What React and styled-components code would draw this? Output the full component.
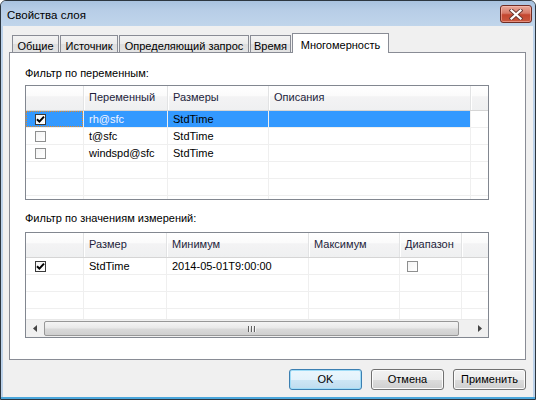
import React from 'react';
import styled, { createGlobalStyle, css } from 'styled-components';

const Global = createGlobalStyle`
  html, body { margin: 0; padding: 0; background: #fff; }
  body { font-family: "Liberation Sans", Arial, sans-serif; font-size: 11px; color: #000; }
  * { box-sizing: border-box; }
`;

const Window = styled.div`
  width: 536px;
  height: 400px;
  display: flex;
  flex-direction: column;
  border: 1px solid #2c3640;
  border-radius: 6px 6px 0 0;
  overflow: hidden;
  background: #bcd2ea;
  box-shadow: inset 0 -2px 0 #4aa6db;
`;

const TitleBar = styled.div`
  height: 25px;
  flex: none;
  display: flex;
  align-items: flex-start;
  justify-content: space-between;
  padding: 0 3px 0 6px;
  background: linear-gradient(180deg, #a8c2df 0%, #b8cee7 40%, #c0d5eb 100%);
`;

const Title = styled.div`
  font-size: 11.5px;
  line-height: 14px;
  padding-top: 7px;
  color: #000;
`;

const CloseBtn = styled.div`
  width: 32px;
  height: 18px;
  margin-top: 4px;
  border: 1px solid #6e2c24;
  border-radius: 3px;
  background: linear-gradient(180deg, #e9a99a 0%, #d77a68 45%, #c4462f 55%, #c9583f 100%);
  box-shadow: inset 0 0 0 1px rgba(255, 200, 190, 0.5);
  display: flex;
  align-items: center;
  justify-content: center;
`;

const Client = styled.div`
  flex: 1;
  margin: 0 2px 2px 2px;
  background: #f0f0f0;
  display: flex;
  flex-direction: column;
  padding: 7px 7px 0 6px;
`;

const TabStrip = styled.div`
  display: flex;
  align-items: flex-end;
  height: 20px;
  margin-bottom: -1px;
  padding-left: 3px;
  position: relative;
  z-index: 1;
`;

const Tab = styled.div`
  width: ${(p) => p.$w}px;
  border: 1px solid #898c95;
  border-bottom: none;
  text-align: center;
  white-space: nowrap;
  ${(p) =>
    p.$active
      ? css`
          height: 20px;
          background: #fff;
          line-height: 14px;
          padding-top: 4px;
          margin-left: 0;
        `
      : css`
          height: 17px;
          margin-bottom: 1px;
          margin-right: 1px;
          background: linear-gradient(180deg, #f3f3f3 0%, #ebebeb 50%, #dedede 51%, #e4e4e4 100%);
          line-height: 14px;
          padding-top: 3px;
        `}
`;

const Panel = styled.div`
  height: 308px;
  border: 1px solid #898c95;
  background: #fff;
  padding: 13px 0 0 15px;
  display: flex;
  flex-direction: column;
`;

const Label = styled.div`
  height: 14px;
  line-height: 14px;
  margin-top: ${(p) => p.$mt || 0}px;
  margin-bottom: ${(p) => p.$mb}px;
`;

const Grid = styled.div`
  width: 464px;
  height: ${(p) => p.$h}px;
  border: 1px solid #828790;
  background: #fff;
  display: flex;
  flex-direction: column;
  overflow: hidden;
`;

const HeaderRow = styled.div`
  display: grid;
  grid-template-columns: ${(p) => p.$cols};
  height: 25px;
  flex: none;
  background: linear-gradient(180deg, #ffffff 0%, #fbfbfb 40%, #f3f3f4 45%, #eff0f1 100%);
  border-bottom: 1px solid #d5d5d5;
`;

const HeaderCell = styled.div`
  padding-left: 5px;
  line-height: 23px;
  white-space: nowrap;
  overflow: hidden;
  color: #1e1e3c;
  border-left: ${(p) => (p.$first ? 'none' : '1px solid #e2e3e4')};
  box-shadow: ${(p) => (p.$first ? 'none' : 'inset 1px 0 0 #fff')};
`;

const Rows = styled.div`
  flex: 1;
  overflow: hidden;
`;

const Row = styled.div`
  display: grid;
  grid-template-columns: ${(p) => p.$cols};
  height: 17px;
  border-bottom: 1px solid #efefef;
`;

const Cell = styled.div`
  padding-left: ${(p) => p.$pl ?? 5}px;
  line-height: 16px;
  white-space: nowrap;
  overflow: hidden;
  display: flex;
  align-items: center;
  border-left: ${(p) => (p.$first ? 'none' : '1px solid #efefef')};
  background: ${(p) => (p.$sel ? '#3399ff' : 'transparent')};
  color: ${(p) => (p.$light ? '#f4f4ff' : '#000')};
  ${(p) =>
    p.$focus &&
    css`
      outline: 1px dotted #e08a2a;
      outline-offset: -1px;
    `}
`;

const Box = styled.div`
  width: 11px;
  height: 11px;
  border: 1px solid ${(p) => (p.$checked ? '#3a3a3a' : '#8e8f8f')};
  background: linear-gradient(135deg, #f4f4f4 0%, #ffffff 100%);
  display: flex;
  align-items: center;
  justify-content: center;
`;

const Scrollbar = styled.div`
  height: 18px;
  flex: none;
  display: flex;
  align-items: stretch;
  background: #f0f0f0;
  border-top: 1px solid #e8e8e8;
`;

const ArrowBtn = styled.div`
  width: ${(p) => p.$w}px;
  display: flex;
  align-items: center;
  justify-content: center;
`;

const Thumb = styled.div`
  width: ${(p) => p.$w}px;
  margin: 1px 0;
  border: 1px solid #979797;
  border-radius: 2px;
  background: linear-gradient(180deg, #f4f4f4 0%, #e9e9e9 45%, #d9d9d9 55%, #cfcfcf 100%);
  display: flex;
  align-items: center;
  justify-content: center;
  gap: 1px;
`;

const GripLine = styled.div`
  width: 1px;
  height: 6px;
  background: #606060;
  box-shadow: 1px 0 0 #f5f5f5;
  margin-right: 1px;
`;

const Track = styled.div`
  flex: 1;
`;

const ButtonRow = styled.div`
  display: flex;
  justify-content: flex-end;
  gap: 9px;
  margin-top: 9px;
`;

const Button = styled.div`
  width: 73px;
  height: 21px;
  border: 1px solid ${(p) => (p.$default ? '#3c7fb1' : '#707070')};
  border-radius: 3px;
  text-align: center;
  line-height: 19px;
  background: ${(p) =>
    p.$default
      ? 'linear-gradient(180deg, #eaf6fd 0%, #e4f2fb 50%, #cde6f5 51%, #bfdcef 100%)'
      : 'linear-gradient(180deg, #f2f2f2 0%, #ebebeb 50%, #dddddd 51%, #cfcfcf 100%)'};
  box-shadow: inset 0 0 0 1px ${(p) => (p.$default ? '#9fdcf7' : '#fcfcfc')};
`;

const Check = () => (
  <svg width="9" height="9" viewBox="0 0 9 9">
    <path d="M1 4.2 L3.4 6.6 L8 1.6" stroke="#000" strokeWidth="2" fill="none" />
  </svg>
);

const CheckBox = ({ checked }) => <Box $checked={checked}>{checked && <Check />}</Box>;

const CloseX = () => (
  <svg width="14" height="11" viewBox="0 0 14 11">
    <path d="M2.5 1.5 L11.5 9.5 M11.5 1.5 L2.5 9.5" stroke="#6b3a33" strokeWidth="4" strokeLinecap="square" />
    <path d="M2.5 1.5 L11.5 9.5 M11.5 1.5 L2.5 9.5" stroke="#ffffff" strokeWidth="2.2" strokeLinecap="square" />
  </svg>
);

const LeftArrow = () => (
  <svg width="4" height="7" viewBox="0 0 4 7">
    <path d="M4 0 L0 3.5 L4 7 Z" fill="#444" />
  </svg>
);
const RightArrow = () => (
  <svg width="4" height="7" viewBox="0 0 4 7">
    <path d="M0 0 L4 3.5 L0 7 Z" fill="#444" />
  </svg>
);

const cols1 = '57px 84px 101px 202px 18px';
const cols2 = '57px 83px 142px 91px 62px 27px';

const vars = [
  { checked: true, name: 'rh@sfc', dim: 'StdTime', sel: true },
  { checked: false, name: 't@sfc', dim: 'StdTime' },
  { checked: false, name: 'windspd@sfc', dim: 'StdTime' },
  null,
  null,
  null,
];

export default function App() {
  return (
    <>
      <Global />
      <Window>
        <TitleBar>
          <Title>Свойства слоя</Title>
          <CloseBtn>
            <CloseX />
          </CloseBtn>
        </TitleBar>
        <Client>
          <TabStrip>
            <Tab $w={47}>Общие</Tab>
            <Tab $w={58}>Источник</Tab>
            <Tab $w={130}>Определяющий запрос</Tab>
            <Tab $w={41}>Время</Tab>
            <Tab $w={97} $active>Многомерность</Tab>
          </TabStrip>
          <Panel>
            <Label $mb={5}>Фильтр по переменным:</Label>
            <Grid $h={115}>
              <HeaderRow $cols={cols1}>
                <HeaderCell $first />
                <HeaderCell>Переменный</HeaderCell>
                <HeaderCell>Размеры</HeaderCell>
                <HeaderCell>Описания</HeaderCell>
                <HeaderCell />
              </HeaderRow>
              <Rows>
                {vars.map((v, i) => (
                  <Row key={i} $cols={cols1}>
                    <Cell $first $pl={9} $sel={v?.sel} $focus={v?.sel}>
                      {v && <CheckBox checked={v.checked} />}
                    </Cell>
                    <Cell $sel={v?.sel} $light={v?.sel}>{v?.name}</Cell>
                    <Cell $sel={v?.sel}>{v?.dim}</Cell>
                    <Cell $sel={v?.sel} />
                    <Cell />
                  </Row>
                ))}
              </Rows>
            </Grid>
            <Label $mt={11} $mb={7}>Фильтр по значениям измерений:</Label>
            <Grid $h={106}>
              <HeaderRow $cols={cols2}>
                <HeaderCell $first />
                <HeaderCell>Размер</HeaderCell>
                <HeaderCell>Минимум</HeaderCell>
                <HeaderCell>Максимум</HeaderCell>
                <HeaderCell>Диапазон</HeaderCell>
                <HeaderCell />
              </HeaderRow>
              <Rows>
                {[0, 1, 2, 3].map((i) => (
                  <Row key={i} $cols={cols2}>
                    <Cell $first $pl={9}>{i === 0 && <CheckBox checked />}</Cell>
                    <Cell>{i === 0 ? 'StdTime' : ''}</Cell>
                    <Cell>{i === 0 ? '2014-05-01T9:00:00' : ''}</Cell>
                    <Cell />
                    <Cell $pl={7}>{i === 0 && <CheckBox checked={false} />}</Cell>
                    <Cell />
                  </Row>
                ))}
              </Rows>
              <Scrollbar>
                <ArrowBtn $w={18}>
                  <LeftArrow />
                </ArrowBtn>
                <Thumb $w={415}>
                  <GripLine />
                  <GripLine />
                  <GripLine />
                </Thumb>
                <Track />
                <ArrowBtn $w={17}>
                  <RightArrow />
                </ArrowBtn>
              </Scrollbar>
            </Grid>
          </Panel>
          <ButtonRow>
            <Button $default>OK</Button>
            <Button>Отмена</Button>
            <Button>Применить</Button>
          </ButtonRow>
        </Client>
      </Window>
    </>
  );
}
